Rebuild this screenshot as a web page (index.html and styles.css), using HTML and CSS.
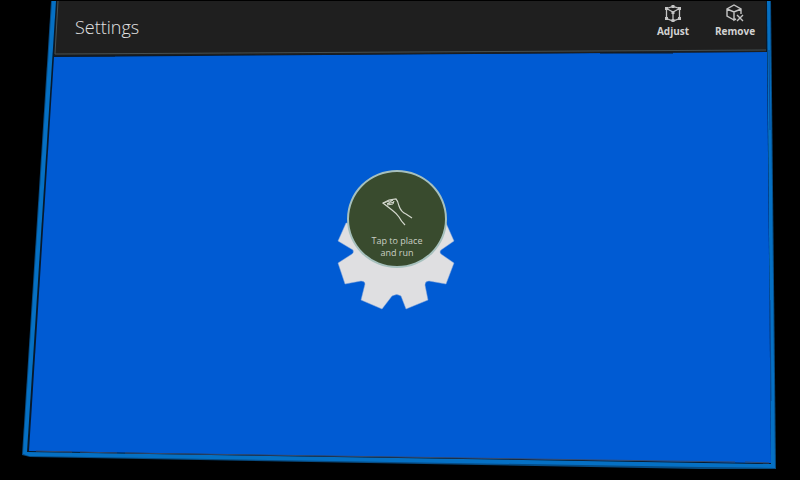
FILE: index.html
```
<!DOCTYPE html>
<html lang="en">

<head>
    <meta charset="utf-8">
    <title>Settings</title>
    <link rel="stylesheet" href="styles.css">
</head>

<body>
    <!-- tilted window frame -->
    <svg class="frame" viewBox="0 0 800 480" preserveAspectRatio="none" aria-hidden="true">
        <polygon points="51,1 771,1 776,469 700,469 30,457 22,455" fill="#064b83"/>
        <polygon points="52,1 770,1 775,468 700,467 29,456 23,454" fill="#0570c4"/>
        <polygon points="56,1 767,1 771,464 27,452" fill="#07192b"/>
        <polygon points="54,57 767,52 771,463 29,451" fill="#005bd3"/>
        <polygon points="57,1 766,1 766,52 54,56" fill="#1f1f1f"/>
        <path d="M58 1L55 54L766 50" fill="none" stroke="#465052"/>
        <path d="M54 56L115 56M600 53L673 53" stroke="#111a24"/>
        <path d="M36 451L72 452M80 452L117 453M125 453L735 462M745 462L769 463" stroke="#344b70"/>
        <path d="M769 50L770 130M770 300L771 401" stroke="#07499b"/>
    </svg>

    <header class="bar">
        <h1>Settings</h1>
        <button class="tool" type="button">
            <svg width="20" height="20" viewBox="0 0 20 20" aria-hidden="true">
                <path d="M3.500 4.500L10 2.500L16.500 4.500V14.500L10 17L3.500 14.500ZM3.500 4.500L10 8L16.500 4.500M10 8V16" fill="none" stroke="#c4c4c4" stroke-width="1.3"/>
                <path d="M2 3h3v3h-3zM15 3h3v3h-3zM2 13h3v3h-3zM15 13h3v3h-3zM8.500 1h3v3h-3zM8.500 15h3v3h-3zM8.500 7h3v3h-3z" fill="#c4c4c4"/>
            </svg>
            <span>Adjust</span>
        </button>
        <button class="tool" type="button">
            <svg width="20" height="20" viewBox="0 0 20 20" aria-hidden="true">
                <path d="M9 16L2 12V5L9 1L16 5V10M2 5L9 8L16 5M9 8V16L11 15M12 11L18 17M18 11L12 17" fill="none" stroke="#c4c4c4" stroke-width="1.4"/>
            </svg>
            <span>Remove</span>
        </button>
    </header>

    <main class="stage">
        <div class="tile">
            <svg class="gear" viewBox="0 0 120 140" aria-hidden="true">
                <path d="M9 53L1 71L16 80Q17 83 15 84L1 93L8 114L24 111Q28 111 28 114L24 130L45 139L55 126Q60 123 64 126L69 139L91 130L88 115Q88 111 92 111L109 114L117 93L104 84Q102 82 104 80L117 71L109 53Z" fill="#dfdfe1" stroke="#83a5da" stroke-width=".5"/>
            </svg>
            <button class="place" type="button">
                <svg width="32" height="30" viewBox="0 0 32 30" aria-hidden="true">
                    <path d="M24 29Q20 25 18 21Q15 17 11 14L2 7L8 4L15 3Q17 5 18 10Q20 16 25 18L31 22" fill="none" stroke="#d5d9cf" stroke-width="1.2"/>
                    <path d="M2 7L12 4L6 8L13 6M6 9L12 8L13 5" fill="none" stroke="#d5d9cf"/>
                </svg>
                <span>Tap to place<br>and run</span>
            </button>
        </div>
    </main>
</body>

</html>
```
FILE: styles.css
```
* {
    box-sizing: border-box;
}

body {
    margin: 0;
    min-height: 100vh;
    display: flex;
    flex-direction: column;
    background: #000;
    color: #d2d2d2;
    font-family: "Open Sans", "Noto Sans", sans-serif;
}

button {
    padding: 0;
    border: 0;
    background: none;
    color: inherit;
    font-family: inherit;
    cursor: pointer;
}

/* sits behind the whole page */
.frame {
    position: absolute;
    inset: 0;
    z-index: -1;
    width: 100%;
    height: 100%;
}

.bar {
    display: flex;
    height: 56px;
    padding: 0 34px 0 75px;
}

.bar h1 {
    margin: 0;
    flex: 1;
    color: #e2e2e2;
    font-size: 18px;
    font-weight: 300;
    line-height: 54px;
}

.tool {
    display: flex;
    flex-direction: column;
    align-items: center;
    width: 62px;
    padding-top: 4px;
    font-size: 10px;
    font-weight: 700;
    line-height: 14px;
}

.stage {
    flex: 1;
    display: flex;
    align-items: center;
    justify-content: center;
    padding: 0 6px 56px 0;
}

.tile {
    position: relative;
    width: 120px;
    height: 140px;
    display: flex;
    justify-content: center;
    align-items: flex-start;
}

.gear {
    position: absolute;
    inset: 0;
}

.place {
    position: relative;
    display: flex;
    flex-direction: column;
    align-items: center;
    gap: 9px;
    width: 100px;
    height: 98px;
    padding-top: 24px;
    border: 2px solid #a6c0bd;
    border-radius: 50%;
    background: #394b2e;
    color: #c9cfc3;
    font-size: 9px;
    line-height: 12px;
}
```
